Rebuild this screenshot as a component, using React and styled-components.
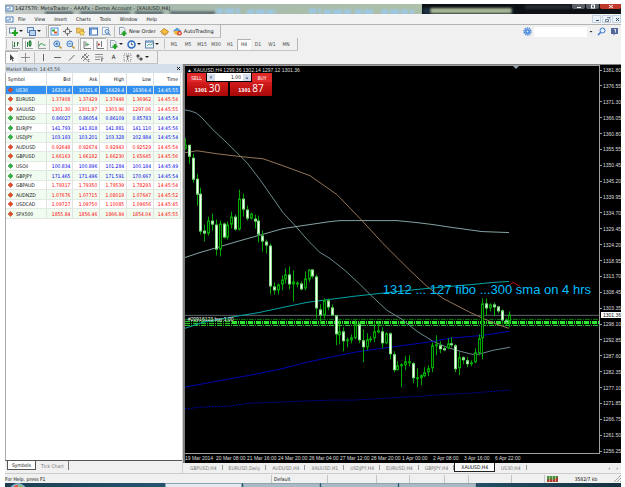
import React, { useState } from 'react'
import styled, { createGlobalStyle, css } from 'styled-components'

const GlobalStyle = createGlobalStyle`
  * {
    box-sizing: border-box;
  }
  body {
    margin: 0;
    background: #fff;
    color: #111;
    font-family: 'DejaVu Sans Condensed', 'DejaVu Sans', sans-serif;
    font-size: 5px;
    line-height: 8px;
  }
  button, input {
    margin: 0;
    padding: 0;
    border: 0;
    background: none;
    color: inherit;
    font: inherit;
  }
  svg {
    display: block;
  }
`

const quotes = [
  ['US30', 'down', '16316.4', '16321.6', '16429.4', '16304.4', '14:45:55'],
  ['EURUSD', 'down', '1.37408', '1.37429', '1.37448', '1.36962', '14:45:54'],
  ['XAUUSD', 'down', '1301.30', '1301.87', '1303.96', '1297.06', '14:45:55'],
  ['NZDUSD', 'up', '0.86027', '0.86054', '0.86109', '0.85783', '14:45:54'],
  ['EURJPY', 'up', '141.793', '141.818', '141.881', '141.110', '14:45:56'],
  ['USDJPY', 'up', '103.183', '103.201', '103.328', '102.984', '14:45:54'],
  ['AUDUSD', 'down', '0.92648', '0.92674', '0.92943', '0.92529', '14:45:54'],
  ['GBPUSD', 'down', '1.66163', '1.66182', '1.66230', '1.65645', '14:45:56'],
  ['USOil', 'up', '100.834', '100.896', '101.284', '100.184', '14:45:49'],
  ['GBPJPY', 'up', '171.465', '171.496', '171.591', '170.667', '14:45:54'],
  ['GBPAUD', 'down', '1.79317', '1.79350', '1.79539', '1.78293', '14:45:54'],
  ['AUDNZD', 'down', '1.07676', '1.07715', '1.08019', '1.07647', '14:45:52'],
  ['USDCAD', 'down', '1.09727', '1.09750', '1.10085', '1.09656', '14:45:45'],
  ['SPX500', 'down', '1855.84', '1856.46', '1866.84', '1854.04', '14:45:55']
]

const prices = [
  '1381.80', '1376.55', '1371.30', '1366.05', '1360.80', '1355.55', '1350.45', '1345.20', '1339.95',
  '1334.70', '1329.45', '1324.20', '1318.95', '1313.70', '1308.45', '1303.35', '1298.10', '1292.85',
  '1287.60', '1282.35', '1277.10', '1271.85', '1266.75', '1261.50', '1256.25'
]

const dates = [
  '19 Mar 2014', '20 Mar 08:00', '21 Mar 16:00', '24 Mar 20:00', '26 Mar 04:00', '27 Mar 12:00',
  '28 Mar 20:00', '1 Apr 00:00', '2 Apr 08:00', '3 Apr 16:00', '6 Apr 22:00'
]

// high, body top, body bottom, low, rising
const candles = [
  [138, 145, 149, 150, 1], [145, 145, 157, 164, 0], [154, 158, 180, 183, 0], [174, 179, 195, 206, 0],
  [188, 194, 232, 235, 0], [225, 231, 234, 242, 0], [217, 221, 234, 236, 1], [214, 221, 225, 231, 0],
  [220, 225, 250, 256, 0], [221, 224, 250, 257, 1], [223, 224, 238, 239, 0], [222, 225, 238, 240, 1],
  [212, 217, 225, 229, 1], [215, 217, 230, 231, 0], [190, 199, 230, 231, 1], [194, 199, 210, 217, 0],
  [206, 210, 219, 221, 0], [213, 214, 219, 220, 1], [215, 219, 222, 229, 0], [216, 221, 235, 243, 0],
  [231, 236, 242, 252, 0], [240, 242, 246, 254, 0], [244, 246, 287, 295, 0], [283, 287, 291, 295, 0],
  [284, 285, 291, 295, 1], [276, 280, 285, 291, 1], [269, 275, 280, 284, 1], [267, 275, 285, 290, 0],
  [271, 282, 285, 302, 1], [282, 283, 284, 288, 1], [282, 284, 290, 291, 0], [272, 279, 289, 291, 1],
  [270, 270, 280, 283, 1], [270, 270, 277, 279, 0], [275, 277, 309, 319, 0], [305, 310, 316, 325, 0],
  [299, 301, 316, 319, 1], [299, 301, 308, 311, 0], [305, 308, 316, 317, 0], [316, 316, 335, 346, 0],
  [321, 332, 336, 345, 1], [328, 332, 342, 352, 0], [338, 340, 342, 348, 1], [335, 338, 341, 344, 1],
  [321, 325, 339, 340, 1], [323, 325, 341, 344, 0], [330, 341, 348, 363, 0], [334, 340, 348, 351, 1],
  [337, 339, 341, 343, 1], [323, 332, 339, 343, 1], [322, 331, 332, 334, 1], [328, 332, 344, 349, 0],
  [333, 334, 344, 345, 1], [333, 334, 355, 360, 0], [352, 355, 371, 373, 0], [362, 366, 371, 371, 1],
  [364, 365, 367, 388, 1], [357, 362, 366, 371, 1], [356, 362, 364, 367, 1], [363, 364, 379, 384, 0],
  [369, 378, 380, 388, 1], [375, 376, 379, 386, 1], [368, 373, 377, 378, 1], [366, 369, 373, 377, 1],
  [343, 346, 369, 373, 1], [336, 345, 347, 356, 1], [342, 346, 350, 354, 0], [347, 349, 350, 352, 0],
  [339, 344, 349, 350, 1], [338, 344, 346, 348, 0], [345, 346, 370, 373, 0], [353, 358, 369, 376, 1],
  [357, 358, 361, 365, 0], [358, 361, 365, 368, 0], [361, 363, 365, 367, 1], [349, 353, 363, 364, 1],
  [335, 339, 354, 356, 1], [299, 304, 339, 360, 1], [299, 304, 309, 316, 0], [304, 305, 309, 312, 1],
  [303, 305, 308, 317, 0], [307, 307, 312, 314, 0], [310, 311, 321, 325, 0], [319, 321, 322, 326, 0],
  [312, 315, 322, 328, 1]
]

const averages = [
  { color: '#6b8a8f', points: '185,110 190,111 196,113 201,117 213,130 229,145 247,163 260,180 267,190 283,213 296,227 308,241 320,253 330,259 345,271 359,284 371,296 387,311 402,320 417,332 433,342 447,348 460,352 472,355 479,355 493,351 510,348' },
  { color: '#85a3a5', points: '185,258 200,253 217,248 237,242 262,235 283,229 303,226 330,222 340,221 397,221 417,223 433,225 453,228 482,232 509,233' },
  { color: '#94765a', points: '185,153 197,151 217,154 242,157 263,159 283,166 310,176 320,183 337,195 362,221 383,244 410,271 427,287 443,299 470,313 483,319 497,325 509,329' },
  { color: '#00a5a5', points: '185,329 203,323 230,318 260,313 283,308 307,303 330,300 353,297 380,294 417,290 450,287 473,285 493,283 509,282' },
  { color: '#c01010', points: '509,286 513,283 520,287' },
  { color: '#0000b4', points: '185,388 217,382 250,376 280,370 307,363 330,358 360,352 390,348 427,343 450,339 483,336 509,332' },
  { color: '#0000a0', dash: '2 1', points: '185,410 200,408 230,407 250,404 280,403 300,402 330,401 353,401 387,399 423,397 450,395 470,394 509,391' }
]

const chartTabs = [
  'GBPUSD,H4', 'EURUSD,Daily', 'AUDUSD,H4', 'XAUUSD,H1', 'USDJPY,H4', 'EURUSD,H4', 'GBPJPY,H4',
  'XAUUSD,H4', 'US30,H4'
]

const glyphs = {
  app: <><rect x="1" y="2" width="7" height="5" fill="#fff" stroke="#4d7fb8" /><path d="M3 6V4M5 5.500V3" stroke="#3b6ea5" /></>,
  newChart: <><rect x=".5" y="1" width="6" height="5" fill="#f5f8fb" stroke="#6f8aa5" /><path d="M6 3v6M3 6h6" stroke="#1fa51f" strokeWidth="2.200" /></>,
  profiles: <><rect x=".5" y=".5" width="6" height="5" fill="#dbe8f7" stroke="#5e86b6" /><rect x="2.500" y="3.500" width="6" height="5" fill="#b9d2ee" stroke="#4d77aa" /></>,
  watch: <><rect x="1" y="1" width="7" height="7" fill="#fff" stroke="#4b8fdc" /><path d="M2 2.500h3v2H2z" fill="#2ca52c" /><path d="M4 4.500h3v2H4z" fill="#e2542a" /></>,
  target: <g fill="none" stroke="#6c6c6c"><circle cx="4.500" cy="4.500" r="2.500" /><path d="M4.500 0v3M4.500 6v3M0 4.500h3M6 4.500h3" /></g>,
  navigator: <><path d="M.5 1h3l1 1h3v4h-7z" fill="#f0c65a" stroke="#b78c22" strokeWidth=".6" /><path d="M6 3l.9 1.800 2 .2-1.500 1.400.4 2L6 7.500 4.200 8.400l.4-2L3.100 5l2-.2z" fill="#ffdf63" stroke="#a8801e" strokeWidth=".5" /></>,
  terminal: <><rect x=".5" y="1" width="8" height="7" fill="#fff" stroke="#3d71b8" /><path d="M1 2h2v5.500H1z" fill="#7aa6dd" /><path d="M1 2h7" stroke="#3d71b8" /></>,
  tester: <><rect x=".5" y=".5" width="6" height="7" fill="#f7fafd" stroke="#9bb3cd" /><circle cx="5" cy="4.500" r="2" fill="#cfe4f7" stroke="#5e86b6" /><path d="M6.500 6L8.500 8.500" stroke="#5e86b6" strokeWidth="1.200" /></>,
  order: <><path d="M1.500.5h4l1.500 2v5h-5.500z" fill="#fff" stroke="#71869d" strokeWidth=".8" /><path d="M2.500 3h3M2.500 5h2" stroke="#9ab" strokeWidth=".6" /><path d="M6 4v5M3.500 6.500h5" stroke="#1fa51f" strokeWidth="2" /></>,
  editor: <><path d="M.5 4.500L4 1.500l4.500 3L5 7.500z" fill="#f5be3f" stroke="#b77b18" strokeWidth=".8" /><path d="M1 6l4 2.500 3.500-3" fill="none" stroke="#c98d24" strokeWidth=".8" /></>,
  auto: <><path d="M.5 4L4 1l4 3-3.500 3z" fill="#5fa4df" stroke="#35709f" strokeWidth=".6" /><path d="M1 4v2.500l3.500 2 3-2V4" fill="#f0bb42" /><circle cx="6.500" cy="6.300" r="2.300" fill="#d8301e" /><path d="M5.600 5.400h1.800v1.800H5.600z" fill="#fff" /></>,
  bars: <g stroke="#2c7a3d" fill="none"><path d="M1.500 1v7.500H9" stroke="#6d7d72" strokeWidth=".7" /><path d="M3.500 2v5M2.500 6h1M6.500 2v4M6.500 3h1.500" /></g>,
  candle: <g stroke="#2c7a3d" fill="none"><path d="M1.500 1v7.500H9" stroke="#6d7d72" strokeWidth=".7" /><path d="M3.500 2v5M6 0v7" /><path d="M5 1.500h2v4H5z" fill="#3fb44f" /></g>,
  line: <g fill="none"><path d="M1.500 1v7.500H9" stroke="#6d7d72" strokeWidth=".7" /><path d="M2 6q2-4 3.500-2T8.500 5" stroke="#2f9a44" /></g>,
  zoomIn: <><path d="M5.500 5.500L8.500 8.500" stroke="#c49b3c" strokeWidth="1.600" /><circle cx="3.800" cy="3.800" r="2.900" fill="#d5e8fb" stroke="#3d7bc4" /><path d="M2.300 3.800h3M3.800 2.300v3" stroke="#24589c" strokeWidth=".8" /></>,
  zoomOut: <><path d="M5.500 5.500L8.500 8.500" stroke="#c49b3c" strokeWidth="1.600" /><circle cx="3.800" cy="3.800" r="2.900" fill="#d5e8fb" stroke="#3d7bc4" /><path d="M2.300 3.800h3" stroke="#24589c" strokeWidth=".8" /></>,
  scroll: <><path d="M2 1v7.500h7" stroke="#555" strokeWidth=".8" fill="none" /><path d="M4.500 3l3 1.500-3 1.500z" fill="#35a046" /><path d="M3.800 1.500v5" stroke="#555" strokeWidth=".7" /></>,
  shift: <><path d="M2 1v7.500h7M6.500 1v6" stroke="#555" strokeWidth=".8" fill="none" /><path d="M3 3l2.500 1.500L3 6z" fill="#c43c2c" /></>,
  clock: <><circle cx="4.500" cy="4.500" r="3.500" fill="#e8f2fc" stroke="#2867bd" strokeWidth="1.500" /><path d="M4.500 2.500v2.200h1.500" stroke="#234" fill="none" strokeWidth=".7" /></>,
  template: <><rect x=".5" y="1" width="8" height="7" fill="#edf5fd" stroke="#5d80a8" /><path d="M1 2h7" stroke="#4d82c2" /><path d="M2 6l2-2 1.500 1L8 3.500" stroke="#3b9a55" fill="none" strokeWidth=".8" /></>,
  pointer: <path d="M3 1v6.500l1.500-1.400L5.500 8.500l1-.4-1-2.400h2z" fill="#444" />,
  cross: <path d="M4.500 0v9M0 4.500h9" stroke="#777" strokeWidth=".8" />,
  vline: <path d="M4.500 1v7" stroke="#666" />,
  hline: <path d="M1 4.500h7" stroke="#666" />,
  trend: <path d="M2 7.500L7.500 2" stroke="#666" />,
  channel: <><path d="M0 6L6 0M2 8l6-6M1 3l5 4M3 1l4 4" stroke="#666" strokeWidth=".8" /><path d="M8.500 6.500H7v2h1.500" stroke="#444" fill="none" strokeWidth=".6" /></>,
  fibo: <><path d="M0 1.500h8M0 4h8M0 6.500h5" stroke="#777" strokeWidth=".8" /><path d="M6.500 8.500v-3h2M6.500 7h1.500" stroke="#444" fill="none" strokeWidth=".6" /></>,
  label: <><rect x="1" y="1" width="7" height="7" fill="none" stroke="#888" strokeDasharray="1 1" /><path d="M3 3h3.500M4.700 3v4" stroke="#555" strokeWidth=".9" /></>,
  arrows: <><path d="M1 3l2-2 2 2-2 2z" fill="#555" /><path d="M4 6l2-2 2 2-2 2z" fill="#555" /><path d="M2 5l4 2" stroke="#777" strokeWidth=".6" /></>,
  gear: <><circle cx="4.500" cy="4.500" r="3.400" fill="none" stroke="#3f7fd6" strokeWidth="1.500" strokeDasharray="1.300 .8" /><circle cx="4.500" cy="4.500" r="2.600" fill="#4d8de0" /><circle cx="4.500" cy="4.500" r="1" fill="#cfe2fa" /></>,
  search: <><path d="M1 8l3-3" stroke="#3f78c6" strokeWidth="1.600" /><circle cx="5.500" cy="3.500" r="2.500" fill="#e3f0fd" stroke="#3f78c6" /></>,
  chat: <><path d="M1 1h7v6H5L3.500 8.500V7H1z" fill="#54689b" /><path d="M4 2.500h1.500v3" stroke="#fff" fill="none" strokeWidth=".8" /></>
}

const Icon = ({ name }) => (
  <svg width="9" height="9" viewBox="0 0 9 9" aria-hidden="true">{glyphs[name]}</svg>
)

const toolButton = (name, title, opts = {}) => (
  <Tool type="button" aria-label={title} $on={opts.on} $wide={opts.menu}>
    <Icon name={name} />
    {opts.menu && <Caret />}
  </Tool>
)

function TitleBar() {
  return (
    <Title>
      <Backdrop viewBox="0 0 616 10" preserveAspectRatio="none" aria-hidden="true">
        <defs>
          <linearGradient id="glass">
            <stop offset="0" stopColor="#c5cac7" />
            <stop offset=".3" stopColor="#a7b9ad" />
            <stop offset="1" stopColor="#adc0a9" />
          </linearGradient>
          <filter id="soft"><feGaussianBlur stdDeviation="1" /></filter>
        </defs>
        <path d="M0 0h616v10H0z" fill="#0d1116" />
        <path d="M0 0h417v10H0z" fill="url(#glass)" />
        <g filter="url(#soft)">
          <path d="M40 9h170" stroke="#54646b" strokeWidth="3" strokeDasharray="28 7 50 5" />
          <path d="M211 7h24M242 8h30M304 7h12M319 8h27M350 8h20M376 8h33" stroke="#9cc8e6" strokeWidth="5" strokeDasharray="7 2 9 2" />
          <path d="M418 4h90v6h-90z" fill="#1d3043" />
          <path d="M426 4h80v5h-80z" fill="#a7b795" />
          <path d="M520 1h46v4h-46z" fill="#262c33" />
        </g>
      </Backdrop>
      <TitleText>
        <Icon name="app" />
        1427570: MetaTrader - AAAFx - Demo Account - [XAUUSD,H4]
      </TitleText>
      <WindowButtons>
        <WindowButton type="button" aria-label="Minimize"><svg width="6" height="5"><path d="M1 3.500h4" stroke="#fff" /></svg></WindowButton>
        <WindowButton type="button" aria-label="Restore"><svg width="6" height="5"><rect x="1.500" y="1" width="3" height="3" fill="none" stroke="#fff" /></svg></WindowButton>
        <WindowButton type="button" aria-label="Close" $close><svg width="6" height="5"><path d="M1 1l4 3M5 1L1 4" stroke="#fff" /></svg></WindowButton>
      </WindowButtons>
    </Title>
  )
}

function MarketWatch() {
  return (
    <Watch>
      <WatchHead>
        Market Watch: 14:45:56
        <CloseButton type="button" aria-label="Close market watch">
          <svg width="5" height="5"><path d="M1 1l3 3M4 1L1 4" stroke="#222" /></svg>
        </CloseButton>
      </WatchHead>
      <WatchBody>
        <Quotes>
          <thead>
            <tr>
              {['Symbol', 'Bid', 'Ask', 'High', 'Low', 'Time'].map(head => <th key={head}>{head}</th>)}
            </tr>
          </thead>
          <tbody>
            {quotes.map(([symbol, trend, ...cells], index) => (
              <Quote key={symbol} $trend={trend} $selected={index === 0}>
                <td>
                  <SymbolName>
                    <svg width="5" height="6" viewBox="0 0 5 6" aria-hidden="true">
                      <path
                        d="M2.500.5L5 3 2.500 5.500 0 3z"
                        fill={trend === 'up' ? '#35b045' : '#e0502c'}
                        stroke={trend === 'up' ? '#1d8530' : '#b8341a'}
                        strokeWidth=".5"
                      />
                    </svg>
                    {symbol}
                  </SymbolName>
                </td>
                {cells.map((cell, i) => <td key={i}>{cell}</td>)}
              </Quote>
            ))}
          </tbody>
        </Quotes>
      </WatchBody>
      <WatchTabs>
        <WatchTab type="button" $active>Symbols</WatchTab>
        <WatchTab type="button">Tick Chart</WatchTab>
      </WatchTabs>
    </Watch>
  )
}

function Chart() {
  return (
    <ChartFrame>
      <Plot>
        <PlotDrawing viewBox="185 66 414 388" preserveAspectRatio="none" aria-hidden="true">
          <g shapeRendering="crispEdges">
            <path d="M185 316h414" stroke="#5d6468" />
            <path d="M185 320h414" stroke="#0f7d14" strokeDasharray="5 1 1 1" />
            <path d="M232 323h367" stroke="#32e632" strokeWidth="3" strokeDasharray="5 1 1 1" />
            <path d="M185 322h47M185 324h47M185 326h414" stroke="#32e632" strokeDasharray="5 1 1 1" />
          </g>
          {averages.map(({ color, dash, points }) => (
            <polyline key={color} points={points} fill="none" stroke={color} strokeDasharray={dash} />
          ))}
          {candles.map(([high, top, bottom, low, rising], index) => {
            const x = Math.round(185 + index * 3.862)
            return (
              <g key={index} stroke="#00a800" shapeRendering="crispEdges">
                <path d={`M${x + 0.5} ${high}V${low}`} />
                <rect
                  x={x - 0.5}
                  y={top + 0.5}
                  width="2"
                  height={Math.max(bottom - top - 1, 1)}
                  fill={rising ? '#001c00' : '#fff'}
                  stroke={rising ? '#00a800' : '#8be08b'}
                />
              </g>
            )
          })}
          <path d="M513 66h6l-3 3z" fill="#8fa0b0" />
        </PlotDrawing>
        <ChartHead>▲ XAUUSD,H4 1299.36 1302.14 1297.12 1301.36</ChartHead>
        <OneClick>
          <TradeLabel type="button">SELL</TradeLabel>
          <Volume>
            <Step type="button" aria-label="Less volume">▾</Step>
            <VolumeInput aria-label="Volume" defaultValue="1.00" />
            <Step type="button" aria-label="More volume">▴</Step>
          </Volume>
          <TradeLabel type="button">BUY</TradeLabel>
          <TradePrice type="button">1301 <big>30</big></TradePrice>
          <TradePrice type="button">1301 <big>87</big></TradePrice>
        </OneClick>
        <OrderLabel>#20916123 buy 1.00</OrderLabel>
        <Annotation>1312 ... 127 fibo ...300 sma on 4 hrs</Annotation>
      </Plot>
      <PriceAxis>
        {prices.map(price => <span key={price}>{price}</span>)}
        <CurrentPrice>1301.36</CurrentPrice>
      </PriceAxis>
      <DateAxis>
        {dates.map(date => <span key={date}>{date}</span>)}
      </DateAxis>
    </ChartFrame>
  )
}

export default function App() {
  const [period, setPeriod] = useState('H4')
  const [tab, setTab] = useState('XAUUSD,H4')

  return (
    <Page>
      <GlobalStyle />
      <TitleBar />
      <MenuBar>
        <Icon name="app" />
        {['File', 'View', 'Insert', 'Charts', 'Tools', 'Window', 'Help'].map(item => (
          <MenuItem type="button" key={item}>{item}</MenuItem>
        ))}
        <ChildButtons>
          <button type="button" aria-label="Minimize chart"><svg width="7" height="7"><path d="M2 4.500h3" stroke="#456" /></svg></button>
          <button type="button" aria-label="Restore chart"><svg width="7" height="7"><path d="M1.500 3.500h3v2h-3zM3 1.500h3v2" fill="none" stroke="#567" strokeWidth=".8" /></svg></button>
          <button type="button" aria-label="Close chart"><svg width="7" height="7"><path d="M2 2l3 3M5 2L2 5" stroke="#345" /></svg></button>
        </ChildButtons>
      </MenuBar>

      <ToolRow>
        <ToolGroup>
          <Grip />
          {toolButton('newChart', 'New chart', { menu: true })}
          {toolButton('profiles', 'Profiles', { menu: true })}
          <Divider />
          {toolButton('watch', 'Market watch', { on: true })}
          {toolButton('target', 'Data window')}
          {toolButton('navigator', 'Navigator')}
          {toolButton('terminal', 'Terminal')}
          {toolButton('tester', 'Strategy tester')}
          <Divider />
          <TextTool type="button"><Icon name="order" />New Order</TextTool>
          {toolButton('editor', 'MetaEditor')}
          <TextTool type="button"><Icon name="auto" />AutoTrading</TextTool>
        </ToolGroup>
        <SearchGroup>
          {toolButton('gear', 'Search options')}
          <SearchInput type="search" aria-label="Search" />
          <SearchArrow type="button" aria-label="Search history"><Caret /></SearchArrow>
          {toolButton('search', 'Find')}
          {toolButton('chat', 'Messages')}
        </SearchGroup>
      </ToolRow>
      <ToolRow>
        <ToolGroup>
          <Grip />
          {toolButton('bars', 'Bar chart')}
          {toolButton('candle', 'Candlesticks', { on: true })}
          {toolButton('line', 'Line chart')}
          <Divider />
          {toolButton('zoomIn', 'Zoom in')}
          {toolButton('zoomOut', 'Zoom out')}
          <Divider />
          {toolButton('scroll', 'Auto scroll', { on: true })}
          {toolButton('shift', 'Chart shift', { on: true })}
          <Divider />
          {toolButton('order', 'Indicators', { menu: true })}
          {toolButton('clock', 'Periods', { menu: true })}
          {toolButton('template', 'Templates', { menu: true })}
          <Grip />
          {['M1', 'M5', 'M15', 'M30', 'H1', 'H4', 'D1', 'W1', 'MN'].map(item => (
            <Period type="button" key={item} $on={item === period} onClick={() => setPeriod(item)}>{item}</Period>
          ))}
        </ToolGroup>
      </ToolRow>
      <ToolRow>
        <ToolGroup $loose>
          {toolButton('pointer', 'Cursor', { on: true })}
          {toolButton('cross', 'Crosshair')}
          <Divider />
          {toolButton('vline', 'Vertical line')}
          {toolButton('hline', 'Horizontal line')}
          {toolButton('trend', 'Trendline')}
          {toolButton('channel', 'Channel')}
          {toolButton('fibo', 'Fibonacci')}
          <Tool type="button">A</Tool>
          {toolButton('label', 'Text label')}
          {toolButton('arrows', 'Arrows', { menu: true })}
        </ToolGroup>
      </ToolRow>

      <Workspace>
        <MarketWatch />
        <ChartColumn>
          <Chart />
          <ChartTabs>
            {chartTabs.map(name => (
              <ChartTab type="button" key={name} $active={name === tab} onClick={() => setTab(name)}>{name}</ChartTab>
            ))}
            <TabArrows>
              <button type="button" aria-label="Previous tab">‹</button>
              <button type="button" aria-label="Next tab">›</button>
            </TabArrows>
          </ChartTabs>
        </ChartColumn>
      </Workspace>

      <StatusBar>
        <span>For Help, press F1</span>
        <span>Default</span>
        <span /><span /><span /><span /><span /><span />
        <Traffic>
          <svg width="11" height="6" viewBox="0 0 11 6" aria-hidden="true">
            <path d="M0 0h11v6H0z" fill="#4d8f3a" />
            <path d="M0 4l3-1 3 1 5-3v5H0z" fill="#b23a2a" />
            <path d="M2.500 0v6M5.500 0v6M8.500 0v6" stroke="#e4eedd" strokeWidth=".5" />
          </svg>
          3582/7 kb
          <svg width="7" height="7" aria-hidden="true"><path d="M0 7l7-7M3 7l4-4M6 7l1-1" stroke="#aaa" /></svg>
        </Traffic>
      </StatusBar>
      <Taskbar>
        <Orb viewBox="0 0 18 4" aria-hidden="true">
          <circle cx="9" cy="9" r="9" fill="#7fb0cf" />
          <path d="M5 4q1-3 4-2v2z" fill="#e2603a" />
          <path d="M10 2q3 0 4 2h-4z" fill="#8cc152" />
        </Orb>
        <TaskWindow $active />
        <TaskWindow />
        <TaskWindow />
        <TaskWindow />
      </Taskbar>
    </Page>
  )
}

const Page = styled.div`
  display: flex;
  flex-direction: column;
  min-height: 100vh;
  padding: 4px 4px 0 5px;
`

const Title = styled.header`
  position: relative;
  display: flex;
  justify-content: space-between;
  height: 10px;
  overflow: hidden;
`

const Backdrop = styled.svg`
  position: absolute;
  inset: 0;
  width: 100%;
  height: 100%;
`

const TitleText = styled.div`
  position: relative;
  display: flex;
  align-items: center;
  gap: 1px;
  height: 8px;
  font-family: 'DejaVu Sans', sans-serif;
  color: #1a1a1a;
`

const WindowButtons = styled.div`
  position: relative;
  display: flex;
  gap: 1px;
`

const WindowButton = styled.button`
  display: flex;
  align-items: center;
  justify-content: center;
  width: ${p => (p.$close ? '21px' : '13px')};
  height: 5px;
  border-radius: 0 0 2px 2px;
  background: ${p => (p.$close ? '#c0392b' : '#5a6068')};
`

const MenuBar = styled.nav`
  display: flex;
  align-items: center;
  height: 11px;
  border-bottom: 1px solid #b4b4b4;
  background: #f3f3f3;
`

const MenuItem = styled.button`
  padding: 0 4px;
  margin-right: 1px;
`

const ChildButtons = styled.div`
  display: flex;
  margin-left: auto;
  gap: 1px;
  button {
    width: 9px;
    height: 8px;
    padding-left: 1px;
    border: 1px solid #c3d2e0;
    background: #eaf2fa;
    overflow: hidden;
  }
`

const ToolRow = styled.div`
  display: flex;
  justify-content: space-between;
  height: 13px;
  background: #f0f0f0;
`

const ToolGroup = styled.div`
  display: flex;
  align-items: center;
  gap: ${p => (p.$loose ? '1px' : '0')};
  padding-right: 4px;
  border-right: 1px solid #b8b8b8;
  border-bottom: 1px solid #c4c4c4;
`

const Grip = styled.span`
  width: 2px;
  height: 10px;
  margin: 0 1px;
  border-left: 1px solid #c2c2c2;
`

const Divider = styled.span`
  width: 1px;
  height: 11px;
  margin: 0 1px;
  background: #bdbdbd;
`

const pressed = css`
  background: #fafafa;
  box-shadow: inset 1px 1px #b0b0b0;
`

const Tool = styled.button`
  display: flex;
  align-items: center;
  justify-content: ${p => (p.$wide ? 'flex-start' : 'center')};
  gap: 1px;
  width: ${p => (p.$wide ? '18px' : '13px')};
  height: 12px;
  font-size: 6px;
  ${p => p.$on && pressed}
`

const Caret = styled.i`
  width: 4px;
  height: 2px;
  background: #222;
  clip-path: polygon(0 0, 100% 0, 50% 100%);
`

const TextTool = styled.button`
  display: flex;
  align-items: center;
  gap: 2px;
  height: 12px;
  padding: 0 2px;
  font-family: 'DejaVu Sans', sans-serif;
`

const Period = styled.button`
  width: 14px;
  height: 11px;
  color: #444;
  ${p => p.$on && pressed}
`

const SearchGroup = styled.div`
  display: flex;
  align-items: center;
`

const SearchInput = styled.input`
  width: 53px;
  height: 10px;
  background: #fff;
  outline: 0;
`

const SearchArrow = styled.button`
  display: flex;
  align-items: center;
  justify-content: center;
  width: 8px;
  height: 10px;
`

const Workspace = styled.main`
  display: flex;
  flex: 1;
  min-height: 0;
  background: #f0f0f0;
`

const Watch = styled.section`
  display: flex;
  flex-direction: column;
  width: 178px;
  border-right: 1px solid #d0d0d0;
`

const WatchHead = styled.div`
  display: flex;
  align-items: center;
  justify-content: space-between;
  height: 9px;
  padding: 0 1px;
  background: #d5dfe9;
  color: #444;
`

const CloseButton = styled.button`
  width: 5px;
  height: 5px;
`

const WatchBody = styled.div`
  flex: 1;
  background: #fff;
  border-left: 1px solid #aaa;
  border-bottom: 1px solid #555;
`

const Quotes = styled.table`
  width: 175px;
  height: 146px;
  border-collapse: collapse;
  table-layout: fixed;
  th, td {
    padding: 0 2px;
    border-right: 1px solid #dfe3df;
    border-bottom: 1px solid #e2e8e2;
    font-weight: normal;
    text-align: right;
  }
  th:first-child, td:first-child {
    width: 40px;
    text-align: left;
  }
  thead tr {
    height: 12px;
  }
`

const Quote = styled.tr`
  background: ${p => (p.$selected ? '#3390f0' : '#fff')};
  color: ${p => (p.$trend === 'up' ? '#0000e6' : '#f00')};
  &:nth-child(even) {
    background: #f1fcf1;
  }
  td:first-child {
    color: #111;
  }
  ${p => p.$selected && css`
    &, td:first-child {
      color: #fff;
    }
  `}
`

const SymbolName = styled.span`
  display: flex;
  align-items: center;
  gap: 3px;
`

const WatchTabs = styled.div`
  display: flex;
  height: 12px;
  padding: 0 2px;
`

const WatchTab = styled.button`
  height: 9px;
  padding: 0 4px;
  color: ${p => (p.$active ? '#111' : '#777')};
  border-right: 1px solid #777;
  ${p => p.$active && css`
    margin-right: 1px;
    border: 1px solid #555;
    border-top: 0;
    background: #fff;
  `}
`

const ChartColumn = styled.section`
  display: flex;
  flex: 1;
  flex-direction: column;
  min-width: 0;
`

const ChartFrame = styled.div`
  display: grid;
  flex: 1;
  grid-template-columns: 1fr 21px;
  grid-template-rows: 1fr 9px;
  border: solid #808080;
  border-width: 1px 0 0 2px;
  background: #000;
  color: #ddd;
  font-family: 'Liberation Sans Narrow', 'Liberation Sans', sans-serif;
  line-height: 6px;
`

const Plot = styled.div`
  position: relative;
  border: solid #a0a0a0;
  border-width: 1px 1px 1px 0;
`

const PlotDrawing = styled.svg`
  position: absolute;
  inset: 0;
  width: 100%;
  height: 100%;
`

const ChartHead = styled.div`
  position: absolute;
  top: 1px;
  left: 2px;
  white-space: nowrap;
`

const OneClick = styled.div`
  position: absolute;
  top: 7px;
  left: 2px;
  display: grid;
  grid-template-columns: 19px 22px 2px 22px 20px;
  grid-template-rows: 9px 14px;
  color: #fff;
  font-family: 'DejaVu Sans Condensed', sans-serif;
  > :nth-child(2) { grid-column: 2 / 5; }
  > :nth-child(4) { grid-column: 1 / 3; }
  > :nth-child(5) { grid-column: 4 / 6; }
`

const TradeLabel = styled.button`
  background: #e02a2a;
`

const Volume = styled.div`
  display: flex;
  align-items: center;
  margin: 0 1px 1px;
  background: #fff;
  color: #111;
`

const VolumeInput = styled.input`
  flex: 1;
  min-width: 0;
  padding-right: 2px;
  text-align: right;
`

const Step = styled.button`
  width: 8px;
  height: 7px;
  background: #d4dde8;
  color: #3d5c90;
  line-height: 5px;
`

const TradePrice = styled.button`
  background: linear-gradient(#d41c1c, #a80808);
  font-weight: bold;
  line-height: 12px;
  big {
    font-family: 'Open Sans', sans-serif;
    font-size: 10px;
    font-weight: normal;
  }
`

const OrderLabel = styled.div`
  position: absolute;
  top: 250px;
  left: 3px;
  color: #fff;
`

const Annotation = styled.div`
  position: absolute;
  top: 216px;
  right: 8px;
  color: #00bfff;
  font-family: 'Liberation Sans', sans-serif;
  font-size: 13px;
  line-height: 16px;
  white-space: nowrap;
`

const PriceAxis = styled.div`
  position: relative;
  display: flex;
  flex-direction: column;
  justify-content: space-between;
  padding-top: 2px;
  span {
    display: flex;
    align-items: center;
    gap: 1px;
    &::before {
      content: '';
      width: 2px;
      height: 1px;
      background: #a0a0a0;
    }
  }
`

const CurrentPrice = styled.b`
  position: absolute;
  top: 247px;
  left: 1px;
  width: 20px;
  padding-left: 2px;
  background: #fff;
  color: #111;
  font-weight: normal;
`

const DateAxis = styled.div`
  display: flex;
  padding-top: 1px;
  white-space: nowrap;
  span {
    width: 31px;
  }
`

const ChartTabs = styled.div`
  display: flex;
  height: 10px;
  padding-left: 1px;
`

const ChartTab = styled.button`
  height: 9px;
  padding: 0 6px;
  color: #777;
  background: linear-gradient(#999, #999) right center / 1px 5px no-repeat;
  ${p => p.$active && css`
    border: 1px solid #222;
    border-top: 0;
    background: #fff;
    color: #000;
  `}
`

const TabArrows = styled.div`
  display: flex;
  gap: 6px;
  margin-left: auto;
  padding-right: 3px;
`

const StatusBar = styled.footer`
  display: grid;
  grid-template-columns: 266px 56px 49px 33px 35px 24px 43px 33px 1fr;
  align-items: center;
  height: 10px;
  border-top: 1px solid #ccc;
  background: #f0f0f0;
  > span {
    height: 8px;
  }
  > span + span {
    padding-left: 2px;
    border-left: 1px solid #c4c4c4;
  }
`

const Traffic = styled.div`
  display: flex;
  align-items: center;
  justify-content: space-between;
  padding-left: 2px;
  border-left: 1px solid #c4c4c4;
`

const Taskbar = styled.div`
  display: flex;
  height: 4px;
  background: linear-gradient(90deg, #1c3d50, #24506a 20%, #2d6480 60%, #16303e);
`

const Orb = styled.svg`
  width: 18px;
  height: 4px;
  margin: 0 138px 0 4px;
`

const TaskWindow = styled.div`
  width: 77px;
  margin-right: 1px;
  border: 1px solid #8fa3b0;
  border-bottom: 0;
  background: ${p => (p.$active ? '#e3eaf0' : '#a9bac6')};
`
